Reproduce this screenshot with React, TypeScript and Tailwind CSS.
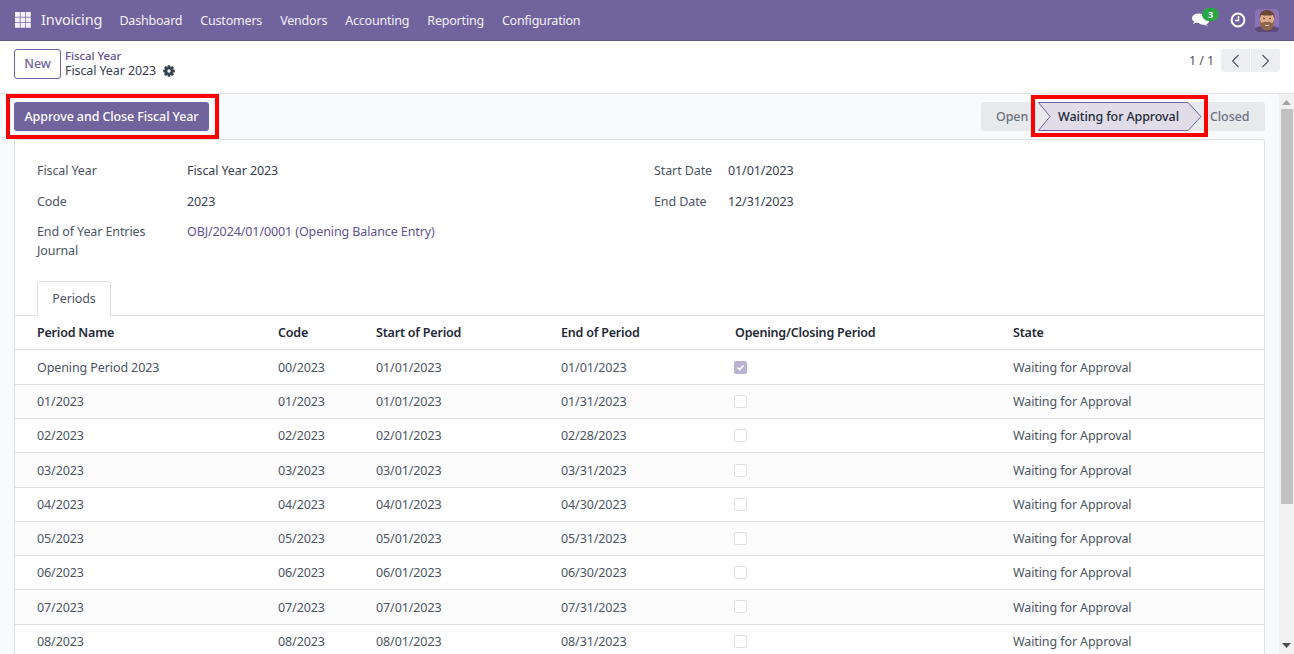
const font = { fontFamily: '"Noto Sans", sans-serif' };

const menus = ["Dashboard", "Customers", "Vendors", "Accounting", "Reporting", "Configuration"];

const periods = [
  ["Opening Period 2023", "00/2023", "01/01/2023", "01/01/2023", true],
  ["01/2023", "01/2023", "01/01/2023", "01/31/2023", false],
  ["02/2023", "02/2023", "02/01/2023", "02/28/2023", false],
  ["03/2023", "03/2023", "03/01/2023", "03/31/2023", false],
  ["04/2023", "04/2023", "04/01/2023", "04/30/2023", false],
  ["05/2023", "05/2023", "05/01/2023", "05/31/2023", false],
  ["06/2023", "06/2023", "06/01/2023", "06/30/2023", false],
  ["07/2023", "07/2023", "07/01/2023", "07/31/2023", false],
  ["08/2023", "08/2023", "08/01/2023", "08/31/2023", false],
] as const;

const cols = "grid grid-cols-[241px_98px_185px_174px_278px_1fr] pl-[22px] pt-[2px] items-center";

const AppsIcon = () => (
  <svg width="16" height="16" viewBox="0 0 16 16" fill="#f3f0f7">
    {[0, 5.5, 11].map((y) =>
      [0, 5.5, 11].map((x) => <rect key={`${x}-${y}`} x={x} y={y} width="4.8" height="4.8" />)
    )}
  </svg>
);

const Comments = () => (
  <svg width="17" height="14" viewBox="0 0 17 14" fill="#fff">
    <ellipse cx="6.5" cy="5.2" rx="6.5" ry="4.8" />
    <path d="M2.5 8l-1.5 3 4.500-2z" />
    <ellipse cx="11.5" cy="8" rx="5.5" ry="3.8" />
    <path d="M13.500 10.500l2.500 3-5-2.500z" />
  </svg>
);

const Clock = () => (
  <svg width="16" height="16" viewBox="0 0 16 16" fill="none" stroke="#fff">
    <circle cx="8" cy="8" r="6.4" strokeWidth="2" />
    <path d="M8.500 4v4.500H5" strokeWidth="1.500" />
  </svg>
);

const Gear = () => (
  <svg width="12" height="12" viewBox="0 0 12 12">
    <g fill="#374151">
      {[0, 45, 90, 135].map((a) => (
        <rect key={a} x="4.6" y="0.2" width="2.8" height="11.6" rx="0.5" transform={`rotate(${a} 6 6)`} />
      ))}
      <circle cx="6" cy="6" r="4.2" />
    </g>
    <circle cx="6" cy="6" r="1.7" fill="#fff" />
  </svg>
);

const Avatar = () => (
  <svg width="24" height="23" viewBox="0 0 24 23" className="rounded-[4px]">
    <rect width="24" height="23" fill="#8a72b4" />
    <path d="M0 23V19l6-2h12l6 2v4z" fill="#5d4a78" />
    <path d="M5 8c0-4 3-6.500 7-6.500s7 2.500 7 6.500v5c0 4.500-3.500 8-7 8s-7-3.500-7-8z" fill="#e0ad8c" />
    <path d="M4.800 10C3.800 4 7.500 1 12 1s8.200 3 7.200 9l-1.200-4c-3 .8-7.500.8-12 0z" fill="#6b4634" />
    <path d="M5 11l1.500 3c1.500-.5 3.500-1.500 5.500-1 2-.5 4 .5 5.500 1l1.500-3v3c0 4.500-3.500 7.500-7 7.500s-7-3-7-7.500z" fill="#8f654c" />
    <path d="M10 16.500h4" stroke="#e8bda0" strokeWidth="1" />
    <circle cx="9" cy="9.500" r="0.8" fill="#3a2a22" />
    <circle cx="15" cy="9.500" r="0.8" fill="#3a2a22" />
  </svg>
);

const Field = ({ label, value, link }: { label: string; value: string; link?: boolean }) => (
  <div className="grid grid-cols-[150px_1fr] leading-[19px]">
    <span className="text-[#4b5563] whitespace-pre-line">{label}</span>
    <span className={link ? "text-[#5f5395]" : "text-[#374151]"}>{value}</span>
  </div>
);

export default function App() {
  return (
    <div style={font} className="h-[654px] overflow-hidden flex flex-col text-[12.5px] tracking-[-0.1px] text-[#374151] bg-white">
      <header className="h-[41px] shrink-0 bg-[#71639e] border-b border-[#5f5387] flex items-center pl-[15px] pr-[15px] text-[#f3f0f7]">
        <AppsIcon />
        <span className="ml-[10px] text-[14.5px]">Invoicing</span>
        <nav className="flex ml-[17px] gap-[18px] pt-[2px] tracking-[-0.2px]">
          {menus.map((m) => (
            <span key={m}>{m}</span>
          ))}
        </nav>
        <div className="ml-auto flex items-center">
          <div className="relative mr-[21px]">
            <Comments />
            <span className="absolute -top-[5px] left-[10px] h-[13px] w-[17px] text-center rounded-full bg-[#28a745] text-white text-[9px] font-bold leading-[13px]">
              3
            </span>
          </div>
          <Clock />
          <div className="ml-[9px] flex">
            <Avatar />
          </div>
        </div>
      </header>

      <div className="h-[53px] shrink-0 border-b border-[#dee2e6] flex items-start pl-[14px] pr-[14px] pt-[8px]">
        <button className="h-[30px] w-[47px] border border-[#71639e] rounded-[3px] text-[#71639e] font-medium">
          New
        </button>
        <div className="ml-[4px] leading-[14px]">
          <div className="text-[11.5px] text-[#5f5395] font-medium">Fiscal Year</div>
          <div className="flex items-center gap-[7px] mt-px text-[#374151]">
            Fiscal Year 2023 <Gear />
          </div>
        </div>
        <div className="ml-auto flex items-start">
          <span className="mr-[7px] text-[#4b5563] leading-[23px]">1 / 1</span>
          <div className="flex gap-px">
            <span className="w-[29px] h-[23px] bg-[#eceef1] rounded-l-[3px] flex items-center justify-center">
              <svg width="9" height="14" viewBox="0 0 9 14" fill="none" stroke="#4b5563" strokeWidth="1.100">
                <path d="M7.500 1L1.500 7l6 6" />
              </svg>
            </span>
            <span className="w-[29px] h-[23px] bg-[#eceef1] rounded-r-[3px] flex items-center justify-center">
              <svg width="9" height="14" viewBox="0 0 9 14" fill="none" stroke="#4b5563" strokeWidth="1.100">
                <path d="M1.500 1l6 6-6 6" />
              </svg>
            </span>
          </div>
        </div>
      </div>

      <div className="flex-1 min-h-0 flex bg-[#f9fafb]">
        <main className="flex-1 min-w-0 pl-[14px] pr-[14px]">
          <div className="h-[45px] pt-[8px] flex items-start justify-between">
            <div className="relative">
              <button className="block h-[29px] w-[195px] pt-[2px] rounded-[3px] bg-[#71639e] text-white font-medium">
                Approve and Close Fiscal Year
              </button>
              <div className="absolute -left-[8px] -right-[10px] -top-[8px] -bottom-[8px] border-[4px] border-[#ff0000]" />
            </div>
            <div className="relative h-[29px] w-[284px] pt-[2px] rounded-[3px] bg-[#e7e9ed] flex items-center font-medium text-[#6b7280]">
              <span className="pl-[15px]">Open</span>
              <div className="absolute left-[57px] top-0 h-[29px] w-[164px] flex items-center text-[#1f2937]">
                <svg width="164" height="29" viewBox="0 0 164 29" className="absolute inset-0">
                  <path d="M.5.500H150L163 14.500 150 28.500H.5L12 14.500z" fill="#e0dde9" stroke="#71639e" />
                </svg>
                <span className="relative pl-[20px] pt-[2px]">Waiting for Approval</span>
              </div>
              <span className="absolute left-[229px]">Closed</span>
              <div className="absolute left-[50px] right-[57px] -top-[7px] -bottom-[6px] border-[4px] border-[#ff0000]" />
            </div>
          </div>

          <div className="bg-white border border-b-0 border-[#dee2e6] rounded-t-[3px] h-[600px]">
            <div className="grid grid-cols-[617px_1fr] pl-[22px] pt-[21px]">
              <div className="flex flex-col gap-[12px]">
                <Field label="Fiscal Year" value="Fiscal Year 2023" />
                <Field label="Code" value="2023" />
                <div className="-mt-px">
                  <Field label={"End of Year Entries\nJournal"} value="OBJ/2024/01/0001 (Opening Balance Entry)" link />
                </div>
              </div>
              <div className="flex flex-col gap-[12px]">
                <div className="grid grid-cols-[74px_1fr] leading-[19px]">
                  <span className="text-[#4b5563]">Start Date</span>
                  <span>01/01/2023</span>
                </div>
                <div className="grid grid-cols-[74px_1fr] leading-[19px]">
                  <span className="text-[#4b5563]">End Date</span>
                  <span>12/31/2023</span>
                </div>
              </div>
            </div>

            <div className="mt-[21px] h-[35px] border-b border-[#dee2e6] pl-[22px] flex items-end">
              <span className="h-[35px] -mb-px w-[74px] border border-b-0 border-[#dee2e6] rounded-t-[3px] bg-white flex items-center justify-center text-[#4b5563]">
                Periods
              </span>
            </div>

            <div className={`${cols} h-[34px] border-b border-[#dee2e6] font-semibold tracking-[-0.2px] text-[#1f2937]`}>
              <span>Period Name</span>
              <span>Code</span>
              <span>Start of Period</span>
              <span>End of Period</span>
              <span>Opening/Closing Period</span>
              <span>State</span>
            </div>
            {periods.map(([name, code, start, end, checked], i) => (
              <div
                key={name}
                className={`${cols} border-b border-[#dee2e6] text-[#4b5563] ${i === 0 ? "h-[35px]" : "h-[34.22px]"} ${i % 2 ? "bg-[#fcfcfd]" : "bg-white"}`}
              >
                <span>{name}</span>
                <span>{code}</span>
                <span>{start}</span>
                <span>{end}</span>
                <span className="-mt-[2px] -ml-px">
                  {checked ? (
                    <span className="w-[13px] h-[13px] rounded-[2px] bg-[#b9b2d0] flex items-center justify-center">
                      <svg width="9" height="9" viewBox="0 0 9 9" fill="none" stroke="#fff" strokeWidth="1.600">
                        <path d="M1.500 4.500l2 2 4-4" />
                      </svg>
                    </span>
                  ) : (
                    <span className="block w-[13px] h-[13px] rounded-[2px] border border-[#dee2e6] bg-white" />
                  )}
                </span>
                <span>Waiting for Approval</span>
              </div>
            ))}
          </div>
        </main>

        <div className="w-[15px] shrink-0 bg-[#f1f1f1] flex flex-col items-center relative">
          <svg width="9" height="5" viewBox="0 0 9 5" className="mt-[6px]" fill="#a3a3a3">
            <path d="M0 5L4.500 0 9 5z" />
          </svg>
          <div className="mt-[4px] w-[12px] h-[395px] bg-[#c1c1c1]" />
          <svg width="9" height="5" viewBox="0 0 9 5" className="absolute bottom-[6px]" fill="#505050">
            <path d="M0 0L4.500 5 9 0z" />
          </svg>
        </div>
      </div>
    </div>
  );
}
